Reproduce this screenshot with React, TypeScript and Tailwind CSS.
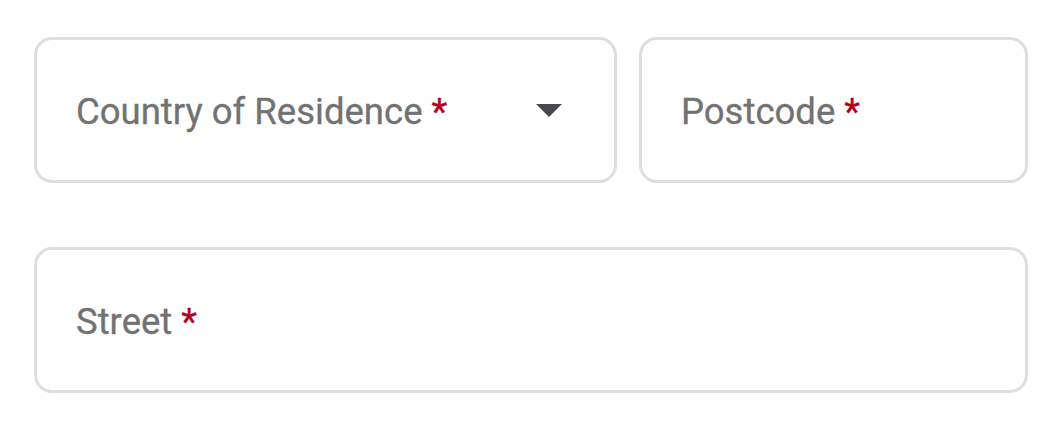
export default function App() {
  return (
    <div
      className="w-[1062px] h-[424px] bg-white px-[34px] pt-[37px] flex flex-col gap-[64px]"
      style={{ fontFamily: 'Roboto, "Liberation Sans", sans-serif' }}
    >
      <div className="flex gap-[22px]">
        <div className="w-[583px] h-[146px] rounded-[18px] border-[3px] border-[#dedede] flex items-center justify-between pl-[39px] pr-[52px]">
          <span className="text-[36.5px] text-[#727272] leading-none pt-[5px] [-webkit-text-stroke:0.3px_#727272]">
            Country of Residence <span className="text-[#b00020] [-webkit-text-stroke:0.3px_#b00020]">*</span>
          </span>
          <svg width="26" height="13" viewBox="0 0 26 13" className="shrink-0">
            <path d="M0 0 L26 0 L13 13 Z" fill="#4a4953" />
          </svg>
        </div>
        <div className="flex-1 h-[146px] rounded-[18px] border-[3px] border-[#dedede] flex items-center pl-[39px]">
          <span className="text-[36.5px] text-[#727272] leading-none pt-[5px] [-webkit-text-stroke:0.3px_#727272]">
            Postcode <span className="text-[#b00020] [-webkit-text-stroke:0.3px_#b00020]">*</span>
          </span>
        </div>
      </div>
      <div className="h-[146px] rounded-[18px] border-[3px] border-[#dedede] flex items-center pl-[39px]">
        <span className="text-[36.5px] text-[#727272] leading-none pt-[5px] [-webkit-text-stroke:0.3px_#727272]">
          Street <span className="text-[#b00020] [-webkit-text-stroke:0.3px_#b00020]">*</span>
        </span>
      </div>
    </div>
  );
}
